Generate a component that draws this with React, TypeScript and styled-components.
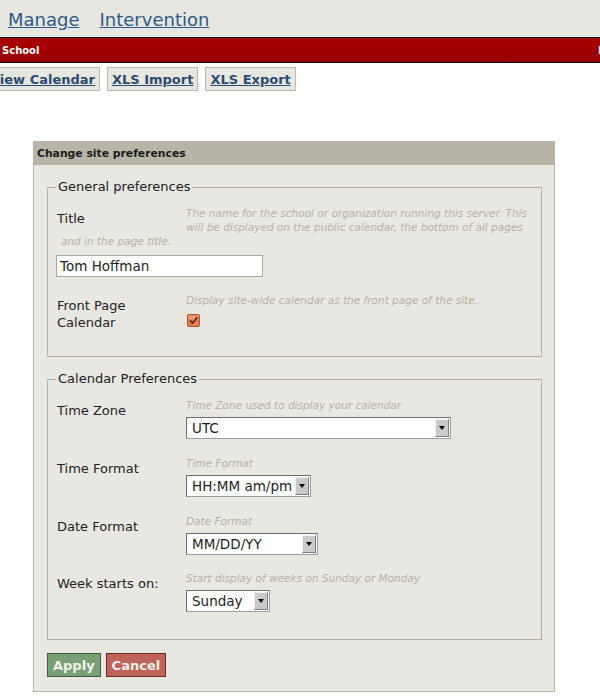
import styled, { createGlobalStyle } from 'styled-components'

const Global = createGlobalStyle`
  html, body {
    margin: 0;
    padding: 0;
    background: #fff;
    overflow: hidden;
  }
  body {
    font-family: "DejaVu Sans", Verdana, sans-serif;
    color: #222;
  }
`

const TopNav = styled.nav`
  display: flex;
  align-items: center;
  gap: 20px;
  height: 37px;
  padding: 2px 0 0 8px;
  box-sizing: border-box;
  background: #e8e6e1;
`

const NavLink = styled.a`
  font-size: 18px;
  color: #2f5a86;
  text-decoration: underline;
  cursor: pointer;
`

const SchoolBar = styled.div`
  display: flex;
  align-items: center;
  height: 24px;
  border-top: 1px solid #000;
  border-bottom: 1px solid #000;
  background: linear-gradient(#ab0000, #970000);
  overflow: hidden;
`

const SchoolName = styled.span`
  padding-left: 2px;
  font-size: 10px;
  font-weight: bold;
  color: #fff;
  flex: 1;
`

const BarEdge = styled.span`
  width: 60px;
  margin-right: -58px;
  font-size: 10px;
  font-weight: bold;
  color: #f4e8f4;
  white-space: nowrap;
`

const Actions = styled.div`
  display: flex;
  gap: 7px;
  margin: 4px 0 0 -15px;
`

const ActionButton = styled.a`
  display: inline-flex;
  align-items: center;
  height: 24px;
  box-sizing: border-box;
  padding: 0 4px;
  border: 1px solid #bcb8ac;
  background: #e8e6e1;
  font-size: 13px;
  font-weight: bold;
  color: #2b4b70;
  text-decoration: underline;
  cursor: pointer;
`

const Panel = styled.form`
  width: 522px;
  box-sizing: border-box;
  margin: 50px 0 0 33px;
  border: 1px solid #b8b4a8;
  background: #e8e7e2;
`

const PanelHeader = styled.div`
  height: 23px;
  display: flex;
  align-items: center;
  padding-left: 3px;
  background: #b8b4a8;
  font-size: 10.8px;
  font-weight: bold;
  color: #1c1c1c;
`

const PanelBody = styled.div`
  padding: 0 12px 14px 13px;
`

const Fieldset = styled.fieldset<{ $bottom: number }>`
  margin: 14px 0 0 0;
  padding: 11px 8px ${p => p.$bottom}px 8px;
  border: 1px solid #b3afa3;
`

const Legend = styled.legend`
  padding: 0 2px;
  font-size: 13px;
  line-height: 16px;
  color: #1c1c1c;
`

const Row = styled.div<{ $space: number }>`
  display: flow-root;
  margin-bottom: ${p => p.$space}px;
`

const Label = styled.label`
  float: left;
  width: 130px;
  box-sizing: border-box;
  padding: 4px 0 0 1px;
  font-size: 13px;
  line-height: 17px;
  color: #1e1e1e;
`

const Hint = styled.div`
  padding-left: 5px;
  font-size: 10.5px;
  line-height: 14px;
  font-style: italic;
  color: #b8b1a3;
`

const Control = styled.div<{ $top?: number }>`
  margin-top: ${p => p.$top ?? 5}px;
  line-height: 0;
`

const TextInput = styled.input`
  width: 207px;
  height: 22px;
  box-sizing: border-box;
  margin: 0;
  padding: 0 3px;
  border: 1px solid #a9a9a9;
  background: #fff;
  font-family: inherit;
  font-size: 13.5px;
  color: #1e1e1e;
  outline: none;
`

const SelectBox = styled.div<{ $width: number }>`
  display: inline-flex;
  align-items: stretch;
  width: ${p => p.$width}px;
  height: 22px;
  box-sizing: border-box;
  border: 1px solid;
  border-color: #6e6e6e #9c9c9c #9c9c9c #6e6e6e;
  background: #fff;
  vertical-align: top;
`

const SelectValue = styled.span`
  flex: 1;
  display: flex;
  align-items: center;
  padding-left: 5px;
  font-size: 13.5px;
  line-height: 16px;
  color: #1e1e1e;
  white-space: nowrap;
  overflow: hidden;
`

const SelectArrow = styled.span`
  width: 14px;
  margin: 1px;
  box-sizing: border-box;
  display: flex;
  align-items: center;
  justify-content: center;
  background: #cacaca;
  border: 1px solid;
  border-color: #f0f0f0 #7c7c7c #7c7c7c #f0f0f0;

  &::after {
    content: '';
    width: 0;
    height: 0;
    border-left: 3px solid transparent;
    border-right: 3px solid transparent;
    border-top: 4px solid #000;
  }
`

const Check = styled.svg`
  margin: 2px 0 0 1px;
`

const Buttons = styled.div`
  display: flex;
  gap: 5px;
  margin-top: 13px;
`

const SubmitButton = styled.button<{ $tone: 'ok' | 'cancel' }>`
  height: 24px;
  box-sizing: border-box;
  padding: 0 5px;
  border: 1px solid ${p => (p.$tone === 'ok' ? '#3e5c3c' : '#6c2a20')};
  background: ${p => (p.$tone === 'ok' ? '#799f77' : '#c0635a')};
  font-family: inherit;
  font-size: 13px;
  font-weight: bold;
  color: #f3f1ea;
  cursor: pointer;
`

const Select = ({ value, width }: { value: string; width: number }) => (
  <SelectBox $width={width}>
    <SelectValue>{value}</SelectValue>
    <SelectArrow />
  </SelectBox>
)

const calendarRows = [
  { label: 'Time Zone', hint: 'Time Zone used to display your calendar', value: 'UTC', width: 265, space: 17 },
  { label: 'Time Format', hint: 'Time Format', value: 'HH:MM am/pm', width: 125, space: 17 },
  { label: 'Date Format', hint: 'Date Format', value: 'MM/DD/YY', width: 132, space: 16 },
  { label: 'Week starts on:', hint: 'Start display of weeks on Sunday or Monday', value: 'Sunday', width: 84, space: 0 },
]

export default function App() {
  return (
    <>
      <Global />
      <TopNav>
        <NavLink>Manage</NavLink>
        <NavLink>Intervention</NavLink>
      </TopNav>
      <SchoolBar>
        <SchoolName>School</SchoolName>
        <BarEdge>Logout</BarEdge>
      </SchoolBar>
      <Actions>
        <ActionButton>View Calendar</ActionButton>
        <ActionButton>XLS Import</ActionButton>
        <ActionButton>XLS Export</ActionButton>
      </Actions>

      <Panel onSubmit={e => e.preventDefault()}>
        <PanelHeader>Change site preferences</PanelHeader>
        <PanelBody>
          <Fieldset $bottom={9}>
            <Legend>General preferences</Legend>
            <Row $space={16}>
              <Label>Title</Label>
              <Hint>
                The name for the school or organization running this server. This will be
                displayed on the public calendar, the bottom of all pages and in the page title.
              </Hint>
              <Control $top={7}>
                <TextInput defaultValue="Tom Hoffman" />
              </Control>
            </Row>
            <Row $space={16}>
              <Label>Front Page Calendar</Label>
              <Hint>Display site-wide calendar as the front page of the site.</Hint>
              <Control $top={5}>
                <Check width="13" height="13" viewBox="0 0 13 13">
                  <rect x="0.5" y="0.5" width="12" height="12" rx="1" fill="#e67c50" stroke="#a9532d" />
                  <rect x="1.5" y="1.5" width="10" height="4" fill="#ee9a74" />
                  <path d="M3 6.3 L5.6 9 L10.3 3.4" fill="none" stroke="#5b2812" strokeWidth="1.7" />
                </Check>
              </Control>
            </Row>
          </Fieldset>

          <Fieldset $bottom={27}>
            <Legend>Calendar Preferences</Legend>
            {calendarRows.map(r => (
              <Row key={r.label} $space={r.space}>
                <Label>{r.label}</Label>
                <Hint>{r.hint}</Hint>
                <Control>
                  <Select value={r.value} width={r.width} />
                </Control>
              </Row>
            ))}
          </Fieldset>

          <Buttons>
            <SubmitButton $tone="ok">Apply</SubmitButton>
            <SubmitButton $tone="cancel" type="button">Cancel</SubmitButton>
          </Buttons>
        </PanelBody>
      </Panel>
    </>
  )
}
